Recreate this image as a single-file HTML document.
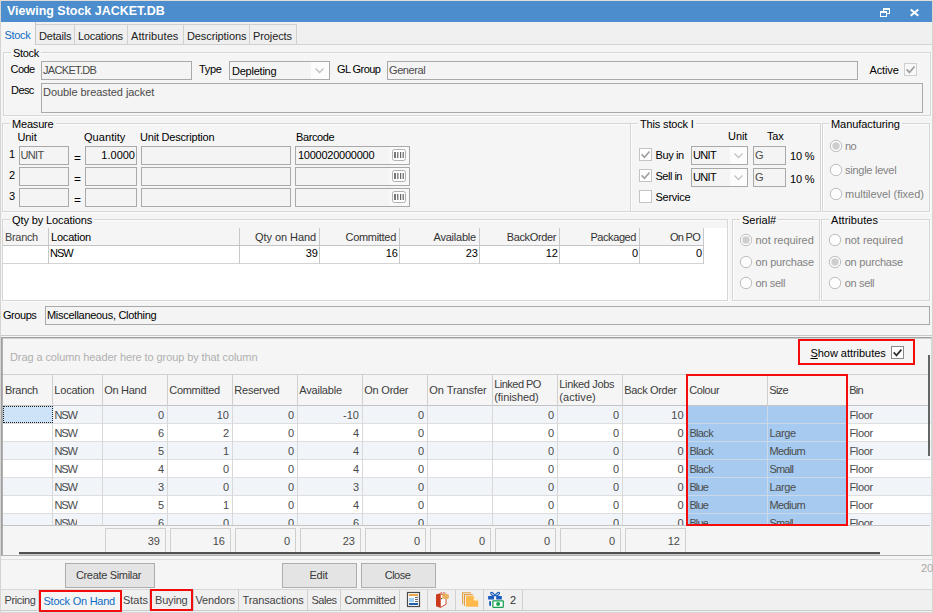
<!DOCTYPE html>
<html><head><meta charset="utf-8"><title>Viewing Stock JACKET.DB</title>
<style>
html,body{margin:0;padding:0;}
body{width:933px;height:613px;position:relative;overflow:hidden;background:#f0f0f0;font-family:"Liberation Sans",sans-serif;font-size:11px;color:#000;}
div,span{position:absolute;box-sizing:border-box;}
.t{white-space:nowrap;line-height:13px;height:13px;}
.g{color:#828282;}
.d{color:#4a4a4a;}
.in{border:1px solid #a9a9a9;background:#f4f4f4;}
.inw{border:1px solid #a0a0a0;background:#fff;}
.grp{border:1px solid #d6d6d6;box-shadow:inset 1px 1px 0 #fcfcfc,1px 1px 0 #fcfcfc;}
.leg{background:#f5f5f5;padding:0 2px;}
.cb{border:1px solid #b0b0b0;background:#fff;}
.rd{border:1px solid #b5b5b5;background:#fff;border-radius:50%;}
.btn{border:1px solid #adadad;background:#e4e4e4;text-align:center;}
.r{text-align:right;}
</style></head><body>

<div class="" style="left:0px;top:0px;width:933px;height:613px;background:#d6d4d2;"></div>
<div class="" style="left:0px;top:0px;width:933px;height:1px;background:#e2ddd8;"></div>
<div class="" style="left:1px;top:1px;width:931px;height:21px;background:#4c8dcd;"></div>
<span class="t " style="left:7px;top:3px;color:#fff;font-weight:bold;font-size:12.47px;line-height:16px;height:16px;">Viewing Stock JACKET.DB</span>
<svg style="position:absolute;left:876px;top:4px" width="50" height="16" viewBox="876 4 50 16" shape-rendering="crispEdges"><rect x="883" y="8" width="7" height="6" fill="#fff"/><rect x="884" y="10" width="5" height="3" fill="#4c8dcd"/><rect x="880" y="11" width="7" height="6" fill="#fff"/><rect x="881" y="13" width="5" height="3" fill="#4c8dcd"/><path d="M910.7 9.5l7.6 6.2M918.3 9.5l-7.6 6.2" stroke="#fff" stroke-width="2" fill="none" shape-rendering="auto"/></svg>
<div class="" style="left:1px;top:22px;width:931px;height:591px;background:#fafafa;"></div>
<div class="" style="left:1px;top:22px;width:931px;height:23px;background:#f0f0f0;"></div>
<div class="" style="left:1px;top:45px;width:931px;height:292px;background:#f5f5f5;"></div>
<div class="" style="left:1px;top:44px;width:931px;height:1px;background:#d4d4d4;"></div>
<div class="" style="left:1px;top:22px;width:35px;height:23px;background:#f5f5f5;border-right:1px solid #c8c8c8;"></div>
<span class="t " style="left:4.4px;top:28.5px;color:#0f6cc4;letter-spacing:-0.303px;">Stock</span>
<div class="" style="left:36px;top:24px;width:39px;height:21px;background:#efefef;border:1px solid #d0d0d0;border-left:none;"></div>
<span class="t " style="left:39px;top:30px;letter-spacing:-0.2px;color:#222;">Details</span>
<div class="" style="left:75px;top:24px;width:53px;height:21px;background:#efefef;border:1px solid #d0d0d0;border-left:none;"></div>
<span class="t " style="left:78px;top:30px;letter-spacing:-0.25px;color:#222;">Locations</span>
<div class="" style="left:128px;top:24px;width:56px;height:21px;background:#efefef;border:1px solid #d0d0d0;border-left:none;"></div>
<span class="t " style="left:131px;top:30px;letter-spacing:0.1px;color:#222;">Attributes</span>
<div class="" style="left:184px;top:24px;width:66px;height:21px;background:#efefef;border:1px solid #d0d0d0;border-left:none;"></div>
<span class="t " style="left:187px;top:30px;letter-spacing:-0.1px;color:#222;">Descriptions</span>
<div class="" style="left:250px;top:24px;width:47px;height:21px;background:#efefef;border:1px solid #d0d0d0;border-left:none;"></div>
<span class="t " style="left:253px;top:30px;letter-spacing:-0.1px;color:#222;">Projects</span>
<div class="grp" style="left:3px;top:52px;width:928px;height:64px;"></div>
<span class="t leg" style="left:11px;top:47px;background:#f5f5f5;letter-spacing:-0.303px;">Stock</span>
<span class="t " style="left:10.6px;top:63px;letter-spacing:-0.574px;">Code</span>
<div class="in" style="left:41px;top:61px;width:151px;height:19px;"></div>
<span class="t d" style="left:43px;top:64px;letter-spacing:-0.677px;">JACKET.DB</span>
<span class="t " style="left:199px;top:63px;letter-spacing:-0.315px;">Type</span>
<div class="in" style="left:229px;top:61px;width:101px;height:19px;"></div>
<span class="t " style="left:232px;top:65px;letter-spacing:-0.232px;">Depleting</span>
<div class="" style="left:311px;top:62px;width:18px;height:17px;background:#fcfcfc;"></div>
<svg style="position:absolute;left:314px;top:67px" width="11" height="8"><path d="M1.5 1.5l4 4 4-4" fill="none" stroke="#c0c0c0" stroke-width="1.3"/></svg>
<span class="t " style="left:337px;top:63px;letter-spacing:-0.576px;">GL Group</span>
<div class="in" style="left:387px;top:61px;width:471px;height:19px;"></div>
<span class="t d" style="left:389px;top:64px;letter-spacing:-0.406px;">General</span>
<span class="t " style="left:869.5px;top:64px;letter-spacing:-0.128px;">Active</span>
<div class="cb" style="left:904px;top:63px;width:13px;height:13px;border-color:#d0d0d0;background:#f8f8f8;"></div>
<svg style="position:absolute;left:904px;top:63px" width="13" height="13"><path d="M2.6 6.3l2.9 3 5-5.8" fill="none" stroke="#a0a0a0" stroke-width="1.8"/></svg>
<span class="t " style="left:11px;top:84px;letter-spacing:-0.566px;">Desc</span>
<div class="in" style="left:41px;top:83px;width:882px;height:30px;"></div>
<span class="t d" style="left:43px;top:86px;letter-spacing:-0.055px;">Double breasted jacket</span>
<div class="grp" style="left:2px;top:123px;width:629px;height:89px;"></div>
<span class="t leg" style="left:10px;top:118px;background:#f5f5f5;letter-spacing:-0.185px;">Measure</span>
<span class="t " style="left:17.4px;top:131px;letter-spacing:-0.066px;">Unit</span>
<span class="t " style="left:84px;top:131px;letter-spacing:0.054px;">Quantity</span>
<span class="t " style="left:140px;top:131px;letter-spacing:-0.209px;">Unit Description</span>
<span class="t " style="left:296px;top:131px;letter-spacing:-0.383px;">Barcode</span>
<span class="t " style="left:9px;top:148px;">1</span>
<div class="in" style="left:19px;top:146px;width:50px;height:19px;"></div>
<span class="t " style="left:73.5px;top:152px;font-size:11px;transform:scaleX(1.08);transform-origin:0 0;">=</span>
<div class="in" style="left:85px;top:146px;width:52px;height:19px;"></div>
<div class="in" style="left:141px;top:146px;width:150px;height:19px;"></div>
<div class="in" style="left:295px;top:146px;width:115px;height:19px;"></div>
<div class="" style="left:389px;top:147px;width:20px;height:17px;background:#f9f9f9;"></div>
<svg style="position:absolute;left:392px;top:149px" width="14" height="12"><rect x="0.5" y="0.5" width="13" height="11" rx="2" fill="#fff" stroke="#b0b0b0"/><path d="M3 3v6" stroke="#555" stroke-width="1.6"/><path d="M5.8 3v6M8.6 3v6M11.2 3v6" stroke="#666" stroke-width="1.2"/></svg>
<span class="t " style="left:9px;top:169px;">2</span>
<div class="in" style="left:19px;top:167px;width:50px;height:19px;"></div>
<span class="t " style="left:73.5px;top:173px;font-size:11px;transform:scaleX(1.08);transform-origin:0 0;">=</span>
<div class="in" style="left:85px;top:167px;width:52px;height:19px;"></div>
<div class="in" style="left:141px;top:167px;width:150px;height:19px;"></div>
<div class="in" style="left:295px;top:167px;width:115px;height:19px;"></div>
<div class="" style="left:389px;top:168px;width:20px;height:17px;background:#f9f9f9;"></div>
<svg style="position:absolute;left:392px;top:170px" width="14" height="12"><rect x="0.5" y="0.5" width="13" height="11" rx="2" fill="#fff" stroke="#b0b0b0"/><path d="M3 3v6" stroke="#555" stroke-width="1.6"/><path d="M5.8 3v6M8.6 3v6M11.2 3v6" stroke="#666" stroke-width="1.2"/></svg>
<span class="t " style="left:9px;top:190px;">3</span>
<div class="in" style="left:19px;top:188px;width:50px;height:19px;"></div>
<span class="t " style="left:73.5px;top:194px;font-size:11px;transform:scaleX(1.08);transform-origin:0 0;">=</span>
<div class="in" style="left:85px;top:188px;width:52px;height:19px;"></div>
<div class="in" style="left:141px;top:188px;width:150px;height:19px;"></div>
<div class="in" style="left:295px;top:188px;width:115px;height:19px;"></div>
<div class="" style="left:389px;top:189px;width:20px;height:17px;background:#f9f9f9;"></div>
<svg style="position:absolute;left:392px;top:191px" width="14" height="12"><rect x="0.5" y="0.5" width="13" height="11" rx="2" fill="#fff" stroke="#b0b0b0"/><path d="M3 3v6" stroke="#555" stroke-width="1.6"/><path d="M5.8 3v6M8.6 3v6M11.2 3v6" stroke="#666" stroke-width="1.2"/></svg>
<span class="t d" style="left:20.4px;top:149px;letter-spacing:-0.643px;">UNIT</span>
<span class="t " style="left:85px;top:149px;width:50px;text-align:right;">1.0000</span>
<span class="t " style="left:298px;top:149px;letter-spacing:-0.249px;">1000020000000</span>
<div class="grp" style="left:630px;top:123px;width:191px;height:89px;"></div>
<span class="t leg" style="left:638px;top:118px;background:#f5f5f5;letter-spacing:-0.160px;">This stock I</span>
<span class="t " style="left:728px;top:130px;letter-spacing:-0.066px;">Unit</span>
<span class="t " style="left:767px;top:130px;letter-spacing:-0.142px;">Tax</span>
<div class="cb" style="left:639px;top:148px;width:13px;height:13px;border-color:#c4c4c4;"></div>
<svg style="position:absolute;left:639px;top:148px" width="13" height="13"><path d="M2.6 6.3l2.9 3 5-5.8" fill="none" stroke="#a0a0a0" stroke-width="1.7"/></svg>
<div class="in" style="left:691px;top:146px;width:57px;height:19px;"></div>
<span class="t " style="left:693px;top:149px;letter-spacing:-0.643px;">UNIT</span>
<div class="" style="left:730px;top:147px;width:17px;height:17px;background:#fcfcfc;"></div>
<svg style="position:absolute;left:733px;top:152px" width="11" height="8"><path d="M1.5 1.5l4 4 4-4" fill="none" stroke="#c4c4c4" stroke-width="1.3"/></svg>
<div class="in" style="left:753px;top:146px;width:33px;height:19px;"></div>
<span class="t d" style="left:755px;top:149px;">G</span>
<span class="t " style="left:790px;top:150px;letter-spacing:-0.145px;">10 %</span>
<span class="t " style="left:655.5px;top:149px;letter-spacing:-0.396px;">Buy in</span>
<div class="cb" style="left:639px;top:169px;width:13px;height:13px;border-color:#c4c4c4;"></div>
<svg style="position:absolute;left:639px;top:169px" width="13" height="13"><path d="M2.6 6.3l2.9 3 5-5.8" fill="none" stroke="#a0a0a0" stroke-width="1.7"/></svg>
<div class="in" style="left:691px;top:168px;width:57px;height:19px;"></div>
<span class="t " style="left:693px;top:171px;letter-spacing:-0.643px;">UNIT</span>
<div class="" style="left:730px;top:169px;width:17px;height:17px;background:#fcfcfc;"></div>
<svg style="position:absolute;left:733px;top:174px" width="11" height="8"><path d="M1.5 1.5l4 4 4-4" fill="none" stroke="#c4c4c4" stroke-width="1.3"/></svg>
<div class="in" style="left:753px;top:168px;width:33px;height:19px;"></div>
<span class="t d" style="left:755px;top:171px;">G</span>
<span class="t " style="left:790px;top:173px;letter-spacing:-0.145px;">10 %</span>
<span class="t " style="left:655.5px;top:170px;letter-spacing:-0.496px;">Sell in</span>
<div class="cb" style="left:639px;top:190px;width:13px;height:13px;border-color:#c4c4c4;"></div>
<span class="t " style="left:655.5px;top:191px;letter-spacing:-0.255px;">Service</span>
<div class="grp" style="left:822px;top:123px;width:108px;height:89px;"></div>
<span class="t leg" style="left:829px;top:118px;background:#f5f5f5;letter-spacing:-0.071px;">Manufacturing</span>
<svg style="position:absolute;left:827.5px;top:137.8px" width="16" height="16"><circle cx="8" cy="8" r="5.7" fill="#fdfdfd" stroke="#bdbdbd" stroke-width="1"/><circle cx="8" cy="8" r="3.7" fill="#cecece"/></svg>
<span class="t g" style="left:845px;top:140px;letter-spacing:-0.625px;">no</span>
<svg style="position:absolute;left:827.5px;top:161.8px" width="16" height="16"><circle cx="8" cy="8" r="5.7" fill="#fdfdfd" stroke="#bdbdbd" stroke-width="1"/></svg>
<span class="t g" style="left:845px;top:164px;letter-spacing:-0.252px;">single level</span>
<svg style="position:absolute;left:827.5px;top:185.8px" width="16" height="16"><circle cx="8" cy="8" r="5.7" fill="#fdfdfd" stroke="#bdbdbd" stroke-width="1"/></svg>
<span class="t g" style="left:845px;top:188px;letter-spacing:-0.032px;">multilevel (fixed)</span>
<div class="grp" style="left:2px;top:219px;width:726px;height:82px;"></div>
<span class="t leg" style="left:10px;top:214px;background:#f5f5f5;letter-spacing:-0.109px;">Qty by Locations</span>
<div class="" style="left:3px;top:228px;width:724px;height:72px;background:#fff;"></div>
<div class="" style="left:3px;top:228px;width:701px;height:17px;background:#f5f5f5;"></div>
<div class="" style="left:3px;top:245px;width:701px;height:1px;background:#c4c4c4;"></div>
<div class="" style="left:3px;top:263px;width:701px;height:1px;background:#d4d4d4;"></div>
<div class="" style="left:48px;top:228px;width:1px;height:36px;background:#c8c8c8;"></div>
<span class="t " style="left:5px;top:231px;color:#444;letter-spacing:-0.327px;">Branch</span>
<span class="t " style="left:4px;top:247px;"></span>
<div class="" style="left:239px;top:228px;width:1px;height:36px;background:#c8c8c8;"></div>
<span class="t " style="left:51px;top:231px;letter-spacing:-0.199px;">Location</span>
<span class="t " style="left:50px;top:247px;letter-spacing:-1.024px;">NSW</span>
<div class="" style="left:319px;top:228px;width:1px;height:36px;background:#c8c8c8;"></div>
<span class="t " style="left:240px;top:231px;width:76px;text-align:right;color:#333;letter-spacing:-0.079px;">Qty on Hand</span>
<span class="t " style="left:240px;top:247px;width:78px;text-align:right;">39</span>
<div class="" style="left:399px;top:228px;width:1px;height:36px;background:#c8c8c8;"></div>
<span class="t " style="left:320px;top:231px;width:76px;text-align:right;color:#333;letter-spacing:-0.299px;">Committed</span>
<span class="t " style="left:320px;top:247px;width:78px;text-align:right;">16</span>
<div class="" style="left:479px;top:228px;width:1px;height:36px;background:#c8c8c8;"></div>
<span class="t " style="left:400px;top:231px;width:76px;text-align:right;color:#333;letter-spacing:-0.217px;">Available</span>
<span class="t " style="left:400px;top:247px;width:78px;text-align:right;">23</span>
<div class="" style="left:559px;top:228px;width:1px;height:36px;background:#c8c8c8;"></div>
<span class="t " style="left:480px;top:231px;width:76px;text-align:right;color:#333;letter-spacing:-0.364px;">BackOrder</span>
<span class="t " style="left:480px;top:247px;width:78px;text-align:right;">12</span>
<div class="" style="left:639px;top:228px;width:1px;height:36px;background:#c8c8c8;"></div>
<span class="t " style="left:560px;top:231px;width:76px;text-align:right;color:#333;letter-spacing:-0.417px;">Packaged</span>
<span class="t " style="left:560px;top:247px;width:78px;text-align:right;">0</span>
<div class="" style="left:703px;top:228px;width:1px;height:36px;background:#c8c8c8;"></div>
<span class="t " style="left:640px;top:231px;width:60px;text-align:right;color:#333;letter-spacing:-0.705px;">On PO</span>
<span class="t " style="left:640px;top:247px;width:62px;text-align:right;">0</span>
<div class="grp" style="left:732px;top:219px;width:88px;height:82px;"></div>
<span class="t leg" style="left:740px;top:214px;background:#f5f5f5;letter-spacing:-0.007px;">Serial#</span>
<svg style="position:absolute;left:738.1px;top:232.2px" width="16" height="16"><circle cx="8" cy="8" r="5.7" fill="#fdfdfd" stroke="#bdbdbd" stroke-width="1"/><circle cx="8" cy="8" r="3.7" fill="#cecece"/></svg>
<span class="t g" style="left:755.5px;top:234px;letter-spacing:-0.035px;">not required</span>
<svg style="position:absolute;left:738.1px;top:254.2px" width="16" height="16"><circle cx="8" cy="8" r="5.7" fill="#fdfdfd" stroke="#bdbdbd" stroke-width="1"/></svg>
<span class="t g" style="left:755.5px;top:256px;letter-spacing:-0.204px;">on purchase</span>
<svg style="position:absolute;left:738.1px;top:275.2px" width="16" height="16"><circle cx="8" cy="8" r="5.7" fill="#fdfdfd" stroke="#bdbdbd" stroke-width="1"/></svg>
<span class="t g" style="left:755.5px;top:277px;letter-spacing:-0.328px;">on sell</span>
<div class="grp" style="left:821px;top:219px;width:109px;height:82px;"></div>
<span class="t leg" style="left:829px;top:214px;background:#f5f5f5;letter-spacing:0.063px;">Attributes</span>
<svg style="position:absolute;left:827.3px;top:232.2px" width="16" height="16"><circle cx="8" cy="8" r="5.7" fill="#fdfdfd" stroke="#bdbdbd" stroke-width="1"/></svg>
<span class="t g" style="left:844.7px;top:234px;letter-spacing:-0.035px;">not required</span>
<svg style="position:absolute;left:827.3px;top:254.2px" width="16" height="16"><circle cx="8" cy="8" r="5.7" fill="#fdfdfd" stroke="#bdbdbd" stroke-width="1"/><circle cx="8" cy="8" r="3.7" fill="#cecece"/></svg>
<span class="t g" style="left:844.7px;top:256px;letter-spacing:-0.204px;">on purchase</span>
<svg style="position:absolute;left:827.3px;top:275.2px" width="16" height="16"><circle cx="8" cy="8" r="5.7" fill="#fdfdfd" stroke="#bdbdbd" stroke-width="1"/></svg>
<span class="t g" style="left:844.7px;top:277px;letter-spacing:-0.328px;">on sell</span>
<span class="t " style="left:3px;top:309px;letter-spacing:-0.446px;">Groups</span>
<div class="in" style="left:45px;top:306px;width:885px;height:19px;"></div>
<span class="t " style="left:47px;top:309px;letter-spacing:-0.294px;">Miscellaneous, Clothing</span>
<div class="" style="left:1px;top:335px;width:931px;height:1px;background:#c8c8c8;"></div>
<div class="" style="left:1px;top:337px;width:931px;height:219px;background:#f5f5f5;border:1px solid #a0a0a0;border-right-color:#d8d8d8;border-bottom-color:#b4b4b4;"></div>
<div class="" style="left:2px;top:338px;width:929px;height:1px;background:#d0d0d0;"></div>
<div class="" style="left:2px;top:338px;width:1px;height:217px;background:#b0b0b0;"></div>
<span class="t " style="left:10px;top:351px;color:#b0b0b0;letter-spacing:-0.091px;">Drag a column header here to group by that column</span>
<div class="" style="left:798px;top:339px;width:117px;height:26px;border:2px solid #f40c0c;"></div>
<span class="t " style="left:810.5px;top:347px;letter-spacing:-0.042px;"><u>S</u>how attributes</span>
<div class="cb" style="left:891px;top:346px;width:13px;height:13px;border-color:#8a8a8a;"></div>
<svg style="position:absolute;left:891px;top:346px" width="13" height="13"><path d="M2.7 6.4l2.8 2.9 4.9-5.7" fill="none" stroke="#333" stroke-width="1.8"/></svg>
<div class="" style="left:3px;top:374px;width:927px;height:1px;background:#d0d0d0;"></div>
<div class="" style="left:3px;top:405px;width:927px;height:1px;background:#c4c4c4;"></div>
<div class="" style="left:3px;top:406px;width:928px;height:18px;background:#f1f5fa;overflow:hidden;border-bottom:1px solid #dedede;"></div>
<div class="" style="left:687px;top:406px;width:160px;height:18px;background:#a6caf0;border-bottom:1px solid #ccd8e6;"></div>
<div class="" style="left:3px;top:424px;width:928px;height:18px;background:#ffffff;overflow:hidden;border-bottom:1px solid #dedede;"></div>
<div class="" style="left:687px;top:424px;width:160px;height:18px;background:#a6caf0;border-bottom:1px solid #ccd8e6;"></div>
<div class="" style="left:3px;top:442px;width:928px;height:18px;background:#f1f5fa;overflow:hidden;border-bottom:1px solid #dedede;"></div>
<div class="" style="left:687px;top:442px;width:160px;height:18px;background:#a6caf0;border-bottom:1px solid #ccd8e6;"></div>
<div class="" style="left:3px;top:460px;width:928px;height:18px;background:#ffffff;overflow:hidden;border-bottom:1px solid #dedede;"></div>
<div class="" style="left:687px;top:460px;width:160px;height:18px;background:#a6caf0;border-bottom:1px solid #ccd8e6;"></div>
<div class="" style="left:3px;top:478px;width:928px;height:18px;background:#f1f5fa;overflow:hidden;border-bottom:1px solid #dedede;"></div>
<div class="" style="left:687px;top:478px;width:160px;height:18px;background:#a6caf0;border-bottom:1px solid #ccd8e6;"></div>
<div class="" style="left:3px;top:496px;width:928px;height:18px;background:#ffffff;overflow:hidden;border-bottom:1px solid #dedede;"></div>
<div class="" style="left:687px;top:496px;width:160px;height:18px;background:#a6caf0;border-bottom:1px solid #ccd8e6;"></div>
<div class="" style="left:3px;top:514px;width:928px;height:11px;background:#f1f5fa;"></div>
<div class="" style="left:687px;top:514px;width:160px;height:11px;background:#a6caf0;"></div>
<div class="" style="left:52px;top:375px;width:1px;height:31px;background:#cfcfcf;"></div>
<div class="" style="left:52px;top:406px;width:1px;height:119px;background:#d8d8d8;"></div>
<span class="t " style="left:5px;top:384px;color:#3c3c3c;letter-spacing:-0.327px;">Branch</span>
<div class="" style="left:102px;top:375px;width:1px;height:31px;background:#cfcfcf;"></div>
<div class="" style="left:102px;top:406px;width:1px;height:119px;background:#d8d8d8;"></div>
<span class="t " style="left:54.3px;top:384px;color:#3c3c3c;letter-spacing:-0.199px;">Location</span>
<div class="" style="left:167px;top:375px;width:1px;height:31px;background:#cfcfcf;"></div>
<div class="" style="left:167px;top:406px;width:1px;height:119px;background:#d8d8d8;"></div>
<span class="t " style="left:104.3px;top:384px;color:#3c3c3c;letter-spacing:-0.304px;">On Hand</span>
<div class="" style="left:232px;top:375px;width:1px;height:31px;background:#cfcfcf;"></div>
<div class="" style="left:232px;top:406px;width:1px;height:119px;background:#d8d8d8;"></div>
<span class="t " style="left:169.3px;top:384px;color:#3c3c3c;letter-spacing:-0.299px;">Committed</span>
<div class="" style="left:297px;top:375px;width:1px;height:31px;background:#cfcfcf;"></div>
<div class="" style="left:297px;top:406px;width:1px;height:119px;background:#d8d8d8;"></div>
<span class="t " style="left:234.3px;top:384px;color:#3c3c3c;letter-spacing:-0.235px;">Reserved</span>
<div class="" style="left:362px;top:375px;width:1px;height:31px;background:#cfcfcf;"></div>
<div class="" style="left:362px;top:406px;width:1px;height:119px;background:#d8d8d8;"></div>
<span class="t " style="left:299.3px;top:384px;color:#3c3c3c;letter-spacing:-0.217px;">Available</span>
<div class="" style="left:427px;top:375px;width:1px;height:31px;background:#cfcfcf;"></div>
<div class="" style="left:427px;top:406px;width:1px;height:119px;background:#d8d8d8;"></div>
<span class="t " style="left:364.3px;top:384px;color:#3c3c3c;letter-spacing:-0.232px;">On Order</span>
<div class="" style="left:492px;top:375px;width:1px;height:31px;background:#cfcfcf;"></div>
<div class="" style="left:492px;top:406px;width:1px;height:119px;background:#d8d8d8;"></div>
<span class="t " style="left:429.3px;top:384px;color:#3c3c3c;letter-spacing:-0.062px;">On Transfer</span>
<div class="" style="left:557px;top:375px;width:1px;height:31px;background:#cfcfcf;"></div>
<div class="" style="left:557px;top:406px;width:1px;height:119px;background:#d8d8d8;"></div>
<span class="t " style="left:494.3px;top:378px;color:#3c3c3c;letter-spacing:-0.542px;">Linked PO</span>
<span class="t " style="left:494.3px;top:391px;color:#3c3c3c;letter-spacing:-0.085px;">(finished)</span>
<div class="" style="left:622px;top:375px;width:1px;height:31px;background:#cfcfcf;"></div>
<div class="" style="left:622px;top:406px;width:1px;height:119px;background:#d8d8d8;"></div>
<span class="t " style="left:559.3px;top:378px;color:#3c3c3c;letter-spacing:-0.356px;">Linked Jobs</span>
<span class="t " style="left:559.3px;top:391px;color:#3c3c3c;letter-spacing:0.055px;">(active)</span>
<div class="" style="left:686px;top:375px;width:1px;height:31px;background:#cfcfcf;"></div>
<div class="" style="left:686px;top:406px;width:1px;height:119px;background:#d8d8d8;"></div>
<span class="t " style="left:624.3px;top:384px;color:#3c3c3c;letter-spacing:-0.344px;">Back Order</span>
<div class="" style="left:767px;top:375px;width:1px;height:31px;background:#cfcfcf;"></div>
<div class="" style="left:767px;top:406px;width:1px;height:119px;background:#ccd8e6;"></div>
<span class="t " style="left:689.3px;top:384px;color:#3c3c3c;letter-spacing:-0.401px;">Colour</span>
<div class="" style="left:846px;top:375px;width:1px;height:31px;background:#cfcfcf;"></div>
<div class="" style="left:846px;top:406px;width:1px;height:119px;background:#d8d8d8;"></div>
<span class="t " style="left:769.3px;top:384px;color:#3c3c3c;letter-spacing:-0.727px;">Size</span>
<span class="t " style="left:849.3px;top:384px;color:#3c3c3c;letter-spacing:-0.802px;">Bin</span>
<span class="t d" style="left:54.4px;top:409px;letter-spacing:-1.024px;">NSW</span>
<span class="t d" style="left:103px;top:409px;width:61px;text-align:right;">0</span>
<span class="t d" style="left:168px;top:409px;width:61px;text-align:right;">10</span>
<span class="t d" style="left:233px;top:409px;width:61px;text-align:right;">0</span>
<span class="t d" style="left:298px;top:409px;width:61px;text-align:right;">-10</span>
<span class="t d" style="left:363px;top:409px;width:61px;text-align:right;">0</span>
<span class="t d" style="left:493px;top:409px;width:61px;text-align:right;">0</span>
<span class="t d" style="left:558px;top:409px;width:61px;text-align:right;">0</span>
<span class="t d" style="left:623px;top:409px;width:60.6px;text-align:right;">10</span>
<span class="t d" style="left:849.4px;top:409px;letter-spacing:-0.292px;">Floor</span>
<span class="t d" style="left:54.4px;top:427px;letter-spacing:-1.024px;">NSW</span>
<span class="t d" style="left:103px;top:427px;width:61px;text-align:right;">6</span>
<span class="t d" style="left:168px;top:427px;width:61px;text-align:right;">2</span>
<span class="t d" style="left:233px;top:427px;width:61px;text-align:right;">0</span>
<span class="t d" style="left:298px;top:427px;width:61px;text-align:right;">4</span>
<span class="t d" style="left:363px;top:427px;width:61px;text-align:right;">0</span>
<span class="t d" style="left:493px;top:427px;width:61px;text-align:right;">0</span>
<span class="t d" style="left:558px;top:427px;width:61px;text-align:right;">0</span>
<span class="t d" style="left:623px;top:427px;width:60.6px;text-align:right;">0</span>
<span class="t d" style="left:689.4px;top:427px;letter-spacing:-0.661px;">Black</span>
<span class="t d" style="left:769.4px;top:427px;letter-spacing:-0.348px;">Large</span>
<span class="t d" style="left:849.4px;top:427px;letter-spacing:-0.292px;">Floor</span>
<span class="t d" style="left:54.4px;top:445px;letter-spacing:-1.024px;">NSW</span>
<span class="t d" style="left:103px;top:445px;width:61px;text-align:right;">5</span>
<span class="t d" style="left:168px;top:445px;width:61px;text-align:right;">1</span>
<span class="t d" style="left:233px;top:445px;width:61px;text-align:right;">0</span>
<span class="t d" style="left:298px;top:445px;width:61px;text-align:right;">4</span>
<span class="t d" style="left:363px;top:445px;width:61px;text-align:right;">0</span>
<span class="t d" style="left:493px;top:445px;width:61px;text-align:right;">0</span>
<span class="t d" style="left:558px;top:445px;width:61px;text-align:right;">0</span>
<span class="t d" style="left:623px;top:445px;width:60.6px;text-align:right;">0</span>
<span class="t d" style="left:689.4px;top:445px;letter-spacing:-0.661px;">Black</span>
<span class="t d" style="left:769.4px;top:445px;letter-spacing:-0.587px;">Medium</span>
<span class="t d" style="left:849.4px;top:445px;letter-spacing:-0.292px;">Floor</span>
<span class="t d" style="left:54.4px;top:463px;letter-spacing:-1.024px;">NSW</span>
<span class="t d" style="left:103px;top:463px;width:61px;text-align:right;">4</span>
<span class="t d" style="left:168px;top:463px;width:61px;text-align:right;">0</span>
<span class="t d" style="left:233px;top:463px;width:61px;text-align:right;">0</span>
<span class="t d" style="left:298px;top:463px;width:61px;text-align:right;">4</span>
<span class="t d" style="left:363px;top:463px;width:61px;text-align:right;">0</span>
<span class="t d" style="left:493px;top:463px;width:61px;text-align:right;">0</span>
<span class="t d" style="left:558px;top:463px;width:61px;text-align:right;">0</span>
<span class="t d" style="left:623px;top:463px;width:60.6px;text-align:right;">0</span>
<span class="t d" style="left:689.4px;top:463px;letter-spacing:-0.661px;">Black</span>
<span class="t d" style="left:769.4px;top:463px;letter-spacing:-0.763px;">Small</span>
<span class="t d" style="left:849.4px;top:463px;letter-spacing:-0.292px;">Floor</span>
<span class="t d" style="left:54.4px;top:481px;letter-spacing:-1.024px;">NSW</span>
<span class="t d" style="left:103px;top:481px;width:61px;text-align:right;">3</span>
<span class="t d" style="left:168px;top:481px;width:61px;text-align:right;">0</span>
<span class="t d" style="left:233px;top:481px;width:61px;text-align:right;">0</span>
<span class="t d" style="left:298px;top:481px;width:61px;text-align:right;">3</span>
<span class="t d" style="left:363px;top:481px;width:61px;text-align:right;">0</span>
<span class="t d" style="left:493px;top:481px;width:61px;text-align:right;">0</span>
<span class="t d" style="left:558px;top:481px;width:61px;text-align:right;">0</span>
<span class="t d" style="left:623px;top:481px;width:60.6px;text-align:right;">0</span>
<span class="t d" style="left:689.4px;top:481px;letter-spacing:-0.858px;">Blue</span>
<span class="t d" style="left:769.4px;top:481px;letter-spacing:-0.348px;">Large</span>
<span class="t d" style="left:849.4px;top:481px;letter-spacing:-0.292px;">Floor</span>
<span class="t d" style="left:54.4px;top:499px;letter-spacing:-1.024px;">NSW</span>
<span class="t d" style="left:103px;top:499px;width:61px;text-align:right;">5</span>
<span class="t d" style="left:168px;top:499px;width:61px;text-align:right;">1</span>
<span class="t d" style="left:233px;top:499px;width:61px;text-align:right;">0</span>
<span class="t d" style="left:298px;top:499px;width:61px;text-align:right;">4</span>
<span class="t d" style="left:363px;top:499px;width:61px;text-align:right;">0</span>
<span class="t d" style="left:493px;top:499px;width:61px;text-align:right;">0</span>
<span class="t d" style="left:558px;top:499px;width:61px;text-align:right;">0</span>
<span class="t d" style="left:623px;top:499px;width:60.6px;text-align:right;">0</span>
<span class="t d" style="left:689.4px;top:499px;letter-spacing:-0.858px;">Blue</span>
<span class="t d" style="left:769.4px;top:499px;letter-spacing:-0.587px;">Medium</span>
<span class="t d" style="left:849.4px;top:499px;letter-spacing:-0.292px;">Floor</span>
<span class="t d" style="left:54.4px;top:517px;height:8px;overflow:hidden;letter-spacing:-1.024px;">NSW</span>
<span class="t d" style="left:103px;top:517px;width:61px;text-align:right;height:8px;overflow:hidden;">6</span>
<span class="t d" style="left:168px;top:517px;width:61px;text-align:right;height:8px;overflow:hidden;">0</span>
<span class="t d" style="left:233px;top:517px;width:61px;text-align:right;height:8px;overflow:hidden;">0</span>
<span class="t d" style="left:298px;top:517px;width:61px;text-align:right;height:8px;overflow:hidden;">6</span>
<span class="t d" style="left:363px;top:517px;width:61px;text-align:right;height:8px;overflow:hidden;">0</span>
<span class="t d" style="left:493px;top:517px;width:61px;text-align:right;height:8px;overflow:hidden;">0</span>
<span class="t d" style="left:558px;top:517px;width:61px;text-align:right;height:8px;overflow:hidden;">0</span>
<span class="t d" style="left:623px;top:517px;width:60.6px;text-align:right;height:8px;overflow:hidden;">0</span>
<span class="t d" style="left:689.4px;top:517px;height:8px;overflow:hidden;letter-spacing:-0.858px;">Blue</span>
<span class="t d" style="left:769.4px;top:517px;height:8px;overflow:hidden;letter-spacing:-0.763px;">Small</span>
<span class="t d" style="left:849.4px;top:517px;height:8px;overflow:hidden;letter-spacing:-0.292px;">Floor</span>
<div class="" style="left:3px;top:406px;width:50px;height:17px;background:#cfe3f8;border:1px dotted #222;"></div>
<div class="" style="left:928px;top:355px;width:2px;height:101px;background:#646464;"></div>
<div class="" style="left:3px;top:525px;width:927px;height:30px;background:#f5f5f5;border-top:1px solid #c4c4c4;"></div>
<div class="" style="left:105px;top:528px;width:61px;height:24px;border:1px solid #cfcfcf;border-bottom:none;"></div>
<span class="t d" style="left:105px;top:535px;width:55px;text-align:right;">39</span>
<div class="" style="left:170px;top:528px;width:61px;height:24px;border:1px solid #cfcfcf;border-bottom:none;"></div>
<span class="t d" style="left:170px;top:535px;width:55px;text-align:right;">16</span>
<div class="" style="left:235px;top:528px;width:61px;height:24px;border:1px solid #cfcfcf;border-bottom:none;"></div>
<span class="t d" style="left:235px;top:535px;width:55px;text-align:right;">0</span>
<div class="" style="left:300px;top:528px;width:61px;height:24px;border:1px solid #cfcfcf;border-bottom:none;"></div>
<span class="t d" style="left:300px;top:535px;width:55px;text-align:right;">23</span>
<div class="" style="left:365px;top:528px;width:61px;height:24px;border:1px solid #cfcfcf;border-bottom:none;"></div>
<span class="t d" style="left:365px;top:535px;width:55px;text-align:right;">0</span>
<div class="" style="left:430px;top:528px;width:61px;height:24px;border:1px solid #cfcfcf;border-bottom:none;"></div>
<span class="t d" style="left:430px;top:535px;width:55px;text-align:right;">0</span>
<div class="" style="left:495px;top:528px;width:61px;height:24px;border:1px solid #cfcfcf;border-bottom:none;"></div>
<span class="t d" style="left:495px;top:535px;width:55px;text-align:right;">0</span>
<div class="" style="left:560px;top:528px;width:61px;height:24px;border:1px solid #cfcfcf;border-bottom:none;"></div>
<span class="t d" style="left:560px;top:535px;width:55px;text-align:right;">0</span>
<div class="" style="left:625px;top:528px;width:61px;height:24px;border:1px solid #cfcfcf;border-bottom:none;"></div>
<span class="t d" style="left:625px;top:535px;width:55px;text-align:right;">12</span>
<div class="" style="left:19px;top:552px;width:861px;height:2px;background:#505050;"></div>
<div class="" style="left:19px;top:554px;width:861px;height:1px;background:#c8c8c8;"></div>
<div class="" style="left:686px;top:374px;width:162px;height:152px;border:2px solid #f40c0c;"></div>
<div class="" style="left:1px;top:556px;width:931px;height:57px;background:#f5f5f5;"></div>
<div class="" style="left:1px;top:559px;width:931px;height:1px;background:#dedede;"></div>
<span class="t " style="left:921px;top:562px;color:#a8a8a8;">20</span>
<div class="btn" style="left:65px;top:563px;width:90px;height:25px;"></div>
<span class="t " style="left:63.5px;top:569px;width:90px;text-align:center;color:#383838;letter-spacing:-0.321px;">Create Similar</span>
<div class="btn" style="left:282px;top:563px;width:75px;height:25px;"></div>
<span class="t " style="left:281px;top:569px;width:75px;text-align:center;color:#383838;letter-spacing:-0.267px;">Edit</span>
<div class="btn" style="left:361px;top:563px;width:75px;height:25px;"></div>
<span class="t " style="left:360px;top:569px;width:75px;text-align:center;color:#383838;letter-spacing:-0.525px;">Close</span>
<div class="" style="left:1px;top:589px;width:931px;height:24px;background:#f0f0f0;border-top:1px solid #d8d8d8;"></div>
<div class="" style="left:1px;top:610px;width:931px;height:1px;background:#cccccc;"></div>
<div class="" style="left:0px;top:612px;width:933px;height:1px;background:#d6d6d6;"></div>
<span class="t " style="left:4.5px;top:594px;color:#444;letter-spacing:-0.375px;">Pricing</span>
<div class="" style="left:38px;top:590px;width:1px;height:20px;background:#d0d0d0;"></div>
<div class="" style="left:39px;top:590px;width:83px;height:22px;background:#f5f5f5;"></div>
<span class="t " style="left:43.5px;top:594.5px;color:#0f6cc4;letter-spacing:-0.238px;">Stock On Hand</span>
<div class="" style="left:121px;top:590px;width:1px;height:20px;background:#d0d0d0;"></div>
<span class="t " style="left:123px;top:594px;color:#444;letter-spacing:-0.016px;">Stats</span>
<div class="" style="left:149px;top:590px;width:1px;height:20px;background:#d0d0d0;"></div>
<span class="t " style="left:155px;top:594px;color:#444;letter-spacing:-0.190px;">Buying</span>
<div class="" style="left:193px;top:590px;width:1px;height:20px;background:#d0d0d0;"></div>
<span class="t " style="left:195.5px;top:594px;color:#444;letter-spacing:-0.125px;">Vendors</span>
<div class="" style="left:238px;top:590px;width:1px;height:20px;background:#d0d0d0;"></div>
<span class="t " style="left:242.5px;top:594px;color:#444;letter-spacing:-0.130px;">Transactions</span>
<div class="" style="left:307px;top:590px;width:1px;height:20px;background:#d0d0d0;"></div>
<span class="t " style="left:311.5px;top:594px;color:#444;letter-spacing:-0.506px;">Sales</span>
<div class="" style="left:340px;top:590px;width:1px;height:20px;background:#d0d0d0;"></div>
<span class="t " style="left:344.5px;top:594px;color:#444;letter-spacing:-0.243px;">Committed</span>
<div class="" style="left:399px;top:590px;width:1px;height:20px;background:#d0d0d0;"></div>
<div class="" style="left:427px;top:590px;width:1px;height:20px;background:#d0d0d0;"></div>
<div class="" style="left:455px;top:590px;width:1px;height:20px;background:#d0d0d0;"></div>
<div class="" style="left:483px;top:590px;width:1px;height:20px;background:#d0d0d0;"></div>
<div class="" style="left:522px;top:590px;width:1px;height:20px;background:#d0d0d0;"></div>
<div class="" style="left:39px;top:590px;width:83px;height:22px;border:2px solid #f40c0c;"></div>
<div class="" style="left:150px;top:589px;width:43px;height:22px;border:2px solid #f40c0c;"></div>
<svg style="position:absolute;left:400px;top:587px" width="130" height="26" viewBox="400 587 130 26"><rect x="407.5" y="592.5" width="12" height="14" fill="#fff" stroke="#4a4a4a" stroke-width="1.2"/><rect x="409" y="594" width="9" height="2" fill="#eaa848"/><rect x="409" y="598" width="5" height="4" fill="#9fd0f2"/><path d="M415 597.5h3M415 599.5h3M415 601.5h3" stroke="#6a6a6a" stroke-width="1"/><rect x="409" y="603" width="9" height="2" fill="#1f5fb0"/><path d="M436 594.6L440.3 593.2V607.7L436 606.2Z" fill="#cc3a1c"/><path d="M440.3 594.3H446V604.3L440.3 607.5Z" fill="#fff" stroke="#cc3a1c" stroke-width="0.9"/><path d="M440.6 592.9H446.2" stroke="#d4553a" stroke-width="1.4" stroke-dasharray="1.5 1.1"/><rect x="442.1" y="594" width="6.9" height="4.9" rx="1.9" fill="#e9b25e"/><circle cx="441.6" cy="598.6" r="0.7" fill="#444"/><path d="M462.6 604.3v-11.6h8.4" fill="none" stroke="#e0a040" stroke-width="1.1"/><path d="M464.5 606v-11.4h8.3" fill="none" stroke="#e0a040" stroke-width="1.1"/><path d="M466 596h7.6l4.6 4.6v6.1H466z" fill="#ffb94c"/><path d="M473.8 596.2v4.2h4.2z" fill="#fff3dc"/><ellipse cx="492.6" cy="594.1" rx="2.3" ry="1.15" transform="rotate(38 492.6 594.1)" fill="none" stroke="#1c5cbc" stroke-width="1.1"/><ellipse cx="497.6" cy="594.1" rx="2.3" ry="1.15" transform="rotate(-38 497.6 594.1)" fill="none" stroke="#1c5cbc" stroke-width="1.1"/><circle cx="495.1" cy="595.2" r="1" fill="#1c5cbc"/><rect x="488.1" y="596" width="5.9" height="3.5" fill="#1c5cbc"/><rect x="496.2" y="596" width="5.6" height="3.5" fill="#1c5cbc"/><rect x="489.2" y="601.2" width="1.8" height="4.6" fill="#1c5cbc"/><rect x="492.9" y="600.9" width="10.4" height="6.4" rx="0.5" fill="#fff" stroke="#16a050" stroke-width="1.25"/><circle cx="498.1" cy="604.1" r="2" fill="#16a050"/></svg>
<span class="t " style="left:510px;top:594px;color:#333;">2</span>
</body></html>
